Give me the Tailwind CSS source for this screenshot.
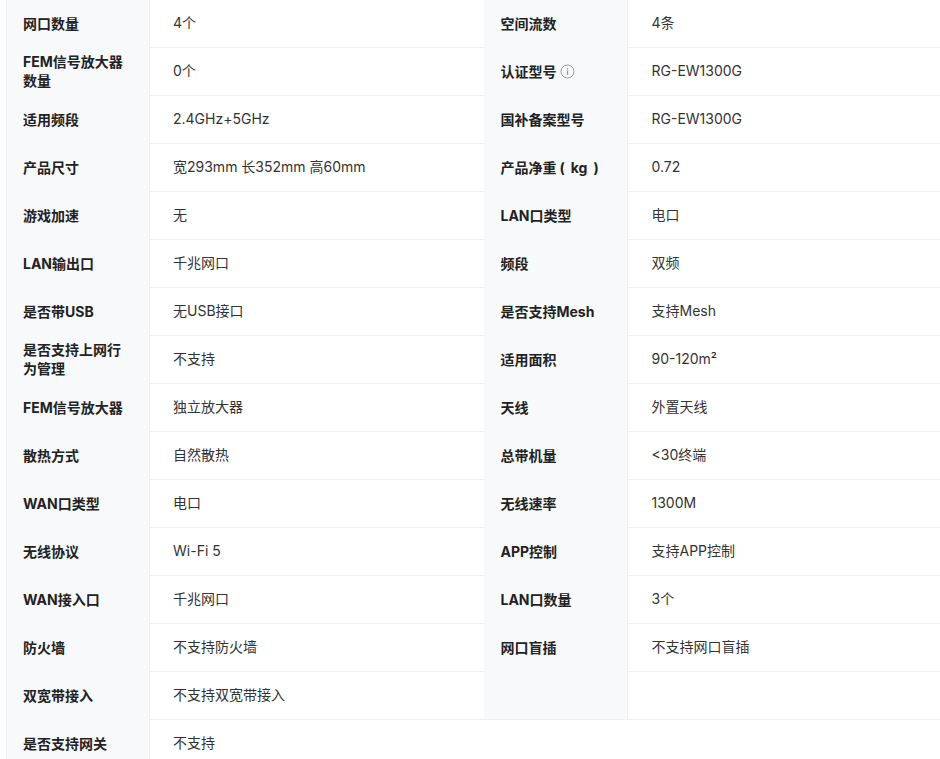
<!DOCTYPE html>
<html><head><meta charset="utf-8"><script src="https://cdn.jsdelivr.net/npm/@tailwindcss/browser@4"></script></head>
<body class="bg-white overflow-hidden">
<div class="h-[759px] overflow-hidden pl-[6px] font-['Inter','Noto_Sans_CJK_SC',sans-serif] text-[14px] leading-[19px] text-[#333] [&>div]:flex [&>div]:h-[48px] [&>div>b]:w-[143px] [&>div>b]:shrink-0 [&>div>b]:bg-[#f8f9fb] [&>div>b:nth-of-type(1)]:border-l [&>div>b:nth-of-type(1)]:border-[#f1f2f4] [&>div>b:nth-of-type(1)]:pl-[16px] [&>div>b:nth-of-type(2)]:pl-[16px] [&>div>b]:pr-[16px] [&>div>b]:pb-[1px] [&>div>b]:flex [&>div>b]:items-center [&>div>b]:font-bold [&>div>b]:text-[#222] [&>div>p]:border-l [&>div>p]:border-b [&>div>p]:border-[#eeeff2] [&>div>p]:pl-[23px] [&>div>p]:flex [&>div>p]:items-center [&>div>p]:pb-[2px] [&>div>p:nth-of-type(1)]:w-[336px] [&>div>p:nth-of-type(2)]:w-[313px]">
<div><b>网口数量</b><p>4个</p><b>空间流数</b><p>4条</p></div>
<div><b class="!pb-[2px]">FEM信号放大器数量</b><p>0个</p><b>认证型号<svg class="ml-[4px] shrink-0" width="15" height="15" viewBox="0 0 15 15" fill="none" stroke="#999"><circle cx="7.5" cy="7.5" r="6.5"/><path d="M7.5 6.5v4.5M7.5 4v1.4" stroke-width="1.2"/></svg></b><p>RG-EW1300G</p></div>
<div><b>适用频段</b><p>2.4GHz+5GHz</p><b>国补备案型号</b><p>RG-EW1300G</p></div>
<div><b>产品尺寸</b><p>宽293mm 长352mm 高60mm</p><b><span>产品净重<span class="ml-[3px] mr-[6px]">(</span>kg<span class="ml-[6px]">)</span></span></b><p>0.72</p></div>
<div><b>游戏加速</b><p>无</p><b>LAN口类型</b><p>电口</p></div>
<div><b>LAN输出口</b><p>千兆网口</p><b>频段</b><p>双频</p></div>
<div><b>是否带USB</b><p>无USB接口</p><b>是否支持Mesh</b><p>支持Mesh</p></div>
<div><b class="!pb-[2px]">是否支持上网行为管理</b><p>不支持</p><b>适用面积</b><p>90-120m²</p></div>
<div><b>FEM信号放大器</b><p>独立放大器</p><b>天线</b><p>外置天线</p></div>
<div><b>散热方式</b><p>自然散热</p><b>总带机量</b><p>&lt;30终端</p></div>
<div><b>WAN口类型</b><p>电口</p><b>无线速率</b><p>1300M</p></div>
<div><b>无线协议</b><p>Wi-Fi 5</p><b>APP控制</b><p>支持APP控制</p></div>
<div><b>WAN接入口</b><p>千兆网口</p><b>LAN口数量</b><p>3个</p></div>
<div><b>防火墙</b><p>不支持防火墙</p><b>网口盲插</b><p>不支持网口盲插</p></div>
<div><b>双宽带接入</b><p>不支持双宽带接入</p><b class="border-b border-b-[#eeeff2]"></b><p></p></div>
<div><b>是否支持网关</b><p>不支持</p></div>
</div>
</body></html>
